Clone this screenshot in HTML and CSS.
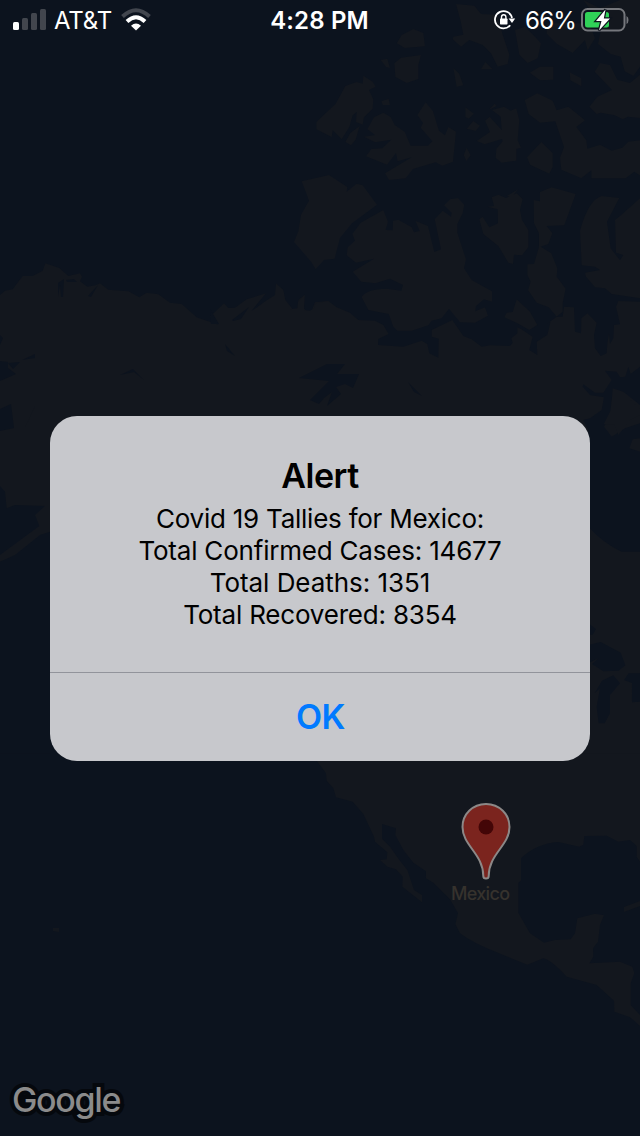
FILE: index.html
```
<!DOCTYPE html>
<html lang="en">
<head>
<meta charset="utf-8">
<title>Alert</title>
<link rel="stylesheet" href="styles.css">
</head>
<body>
<main class="screen">
  <svg class="map" viewBox="0 0 640 1136" aria-hidden="true">
    <!-- Arctic islands -->
    <g class="land" transform="translate(300 0) scale(.33333)">
      <path d="M468 12l55 5 20 25 50 2 15 60 20 60-5 28-30 8-20-40-25-25-40-15-25 20-25-22 2-8 30-6-8-40zM290 130l15-25 35-18 30 12 5 40-60 5zM645 90l30-10 30 30 18 20-10 45-30 14-25-25zM740 70h110v30l10 15-42 44-48-28-30-30zM845 85l25-10 15 40-22 36zM850 0l50 25 60-25h60v200l-20 28-26-14-12-44-30-8-38-30 8-40-22-50z"/>
    </g>
    <g class="land" transform="translate(290 40) scale(.33333)">
      <path d="M272 60l20-4 8 28-12-3zM313 70l20-17 60-8-8 30v42l-35 12-34-18zM490 84l18 18 12 34-20 5zM573 88l13-22 22 22zM719 98l30-18h41v39l-40 2zM839 97l35 18v24l-33-18zM79 268v-22l58-55 29-53 34-12 18 5 2-24 28 18 9 15-20 10 13 28-2 28-26 26-4 22-20-8 2-30-12 10-10 35-23 37-27-27-3 20zM166 306l15-27 28-21-12 41-14 17zM274 184l22-8 4 19h-22z"/>
      <path d="M222 290l33-5-23-18 20-35 28-14 22 13 12 24 30 20 18 42h52l13-13-35-41 7-14-17-24 25-38 22 27 18 58 18 14 10-25 23 14-9 90-32 12-20-10-68 20-22 28-50 5-12-20 80-48-42 12-5-25-27 35-63-25 16-22 33-2 27-26-49 8z"/>
      <path d="M526 202l26 19-16 15-10-5zM530 266l20-23 20 14-13 16zM597 209l17-18 6 7zM521 345l9-22 12 23-13 17zM560 303l40-27-15-34 14-12 36 40-3-40-26-20 36-10 20 12 17-7 9 36-5 60 10 22-14 4v35l-44 6-18-14 2-28 19-22-2-7-52 16zM711 352l43-46 34 33v42l-10 20-58-27zM704 180l38-20 46 22 12 29 35-11 50 41-26 20 30 40 3 25 38-12 35 18 32-9 18-18 36-4v106l-18-12-26 20H904v-24l-30 24-60-26-4-36 12-32-26-77-46 4-34-26zM914 95l16-26 30 6 22 44 38 10 30-25v130l-36-4-16 8-24-12-42-8-12 4-22-22 24-30 44-20z"/>
    </g>
    <!-- Victoria Island and its neighbours -->
    <g class="land" transform="translate(290 170) scale(.33333)">
      <path d="M35 34l82-19 55 36-2 14 30-24 18 5 43 58-75 56-36 44-16 62-32 4-25 28-13-22-52-60 13-32 8-50 24-42z"/>
      <path d="M187 192L212 158 280 120 294 155 287 180 308 181 309 152 325 149 365 172 372 187 389 183 376 152 414 168 433 246 453 238 434 148 458 122 483 140 485 128 462 106 480 88 504 84 523 104 518 130 502 162V188L528 268 522 295 545 330 606 364V395L582 388 558 408 556 424 585 412 594 437 555 458 510 457 477 416 455 445 425 452 415 466 365 482H322L310 470 296 432 235 420 215 382Q225 358 290 356L334 362 339 345 300 326 256 340 214 335 188 305 252 266 198 278 170 256 173 232 195 212z"/>
      <path d="M568 148L578 140 598 172 624 160 623 118 592 110 612 108 605 82 625 74 648 84 680 70 698 88 690 120 696 150 715 180V232L696 256 672 254 669 282 655 278 625 228 580 192zM650 78L685 58 665 80zM731 90L750 94V66L785 52 857 72 823 166 770 168 787 190 775 222 752 230 784 250 802 295 800 320 827 356 818 400 818 425 800 440 776 412 740 398 714 360 722 335 712 315V283L732 282 747 230V190L732 160zM870 182Q895 90 935 78L988 84 951 155 962 235 990 271 1000 255 978 248 975 150 990 138 1050 85V385L965 372 945 355 915 352 888 320 885 308 930 300 915 290 875 286zM643 442L650 428 668 426 680 388 720 425 742 465 718 480 682 460z"/>
    </g>
    <!-- Alaska -->
    <path class="land" transform="translate(0 240) scale(.33333)" d="M0 165L15 152 38 148 68 108 98 108 128 92 136 70 178 84 205 108 240 100 246 110 240 124 262 140 286 136 300 130 325 149 385 154 418 172 440 158 475 163 510 188 545 192 590 232 655 254 630 230 672 190 685 204 705 203 740 178 798 160 755 212 765 206 798 182 825 165 828 130 850 150 856 180 880 210 893 209 895 180 914 164 912 205 918 213 935 212 945 187 985 183 985 1500 150 1000 0 965z"/>
    <!-- mainland Canada and United States -->
    <path class="land" transform="translate(290 170) scale(.33333)" d="M0 418L22 415 24 395 44 376 42 420 60 422 72 415 76 400 115 393 140 412 180 428 205 450 255 452 280 465 296 492 265 507 264 525 340 530 395 512 412 522 418 550 445 563 446 506 425 500 425 480 487 450 520 498 545 508 575 530 600 526 660 528 668 518 664 505 682 490V472L694 478 728 500 718 540 742 555 740 515 772 495 782 452 770 462 800 440 818 440 822 410 852 412 855 485 873 490 874 445 892 430 920 458 912 495 915 535 932 558 950 550 952 520 957 490 960 522 970 505 972 465 990 463 978 410 985 393 1050 395V1800H200V1740H0z"/>
    <!-- Mexico and Central America -->
    <path class="land" transform="translate(300 740) scale(.33333)" d="M46 40L50 62 78 100 80 122 100 145 108 172 158 185 190 222 222 290 225 305 262 337 260 358 240 360 262 380 288 388 308 410 307 440 366 487V465L342 450 322 390 298 360 270 320 246 296V252L288 265 286 285 310 330 340 368 378 394V415L400 428 450 478 474 520 466 552 480 580Q520 610 590 637L682 674 730 655Q750 657 800 710L890 735 942 782 943 815 990 832 1020 858V825L992 795V730L1003 700 997 680 960 665 868 670 880 650 879 625 894 605 900 555 912 526 885 521 832 535 825 580 812 598 765 600 732 608 690 580 655 518V428L663 422V355Q710 310 775 306L838 320 850 314 853 288 920 287 955 305 990 300 1010 318V350L1020 365V40z"/>
    <path class="land" d="M624 907l16-6v5l-16 6zM53 928h6v4l-6-1z"/>
    <!-- lakes and bays -->
    <g class="water">
      <path d="M299 378l28-14h18l-8 10h22l-6 14-8-4-9 3 5 7-14 12 5-14-8 6-5 6-9-4 14-14 5-5zM408 382l14 14-8-4zM58 283l6-4-1 18h-2l-1-12-2 12zM66 280l8-1 3 3h-10zM88 296l10-11-7 12zM0 335l3 3-3 7zM0 361l8 1v6l8 6-16 7zM8 363l12-1-7 7zM22 360l13-6v4zM0 409l11-5 3 24-14 3zM232 320l17-13-8 12-8 2zM210 309l9 15h-8zM225 344l10 12-8-5zM120 375l13-6 11 11-10-8zM35 406l-10 22 9-20z"/>
      <path transform="translate(290 170) scale(.33333)" d="M945 602L980 605 990 622 1006 620 1015 590 1022 612 1050 590V705L1000 665 968 655 962 735 942 770 950 780 965 800 1005 775 1050 760V1145H995Q940 1120 895 1070V780L880 750 900 745 935 720 942 682 900 675 878 650 880 643 915 668 940 668 965 630z"/>
      <path transform="translate(540 400) scale(.33333)" d="M148 672l20 15-10 17h-10zM148 734l34-8 60 32 14 38-20 16-46 2-34-22 20-18-28 14zM164 880l22-38 34-16 20 24-30 35v55l-16 30h-18l-6-50 10-55zM252 840l14-20h34v85l-24 2v-58z"/>
      <path transform="translate(0 400) scale(.33333)" d="M0 258L15 275 20 325 45 315 135 318 105 345 118 378 0 465zM0 485L45 465 120 405 150 395V1060H0z"/>
    </g>
    <path class="land" transform="translate(540 400) scale(.33333)" d="M215 0h55l30 25v20l-30 15-35 45-12-32-32 0 20-40zM268 145l10-27 22-3v40z"/>
    <text class="place" x="451" y="900" textLength="59">Mexico</text>
    <path class="pin" d="M486 804c-13.500 0-23.500 10.500-23.500 23 0 18.500 20.800 27 20.800 49q0 2.500 2.700 2.500t2.700-2.500c0-22 20.800-30.500 20.800-49 0-12.500-10-23-23.500-23z"/>
    <circle class="pin-dot" cx="486" cy="827" r="7.500"/>
  </svg>

  <header class="status">
    <div class="status-side">
      <svg class="signal" width="34" height="22" viewBox="0 0 34 22">
        <rect x="0" y="13" width="6" height="8" rx="1.500" fill="#fff"/>
        <g fill="#42464e"><rect x="9" y="9" width="6" height="12" rx="1.500"/><rect x="18" y="4" width="6" height="17" rx="1.500"/><rect x="27" y="0" width="6" height="21" rx="1.500"/></g>
      </svg>
      <span class="carrier">AT&amp;T</span>
      <svg class="wifi" width="30" height="23" viewBox="0 0 30 23" fill="none">
        <path d="M1.500 8.500Q15-4 28.500 8.500" stroke="#42464e" stroke-width="4"/>
        <path d="M6 13.500Q15 5 24 13.500" stroke="#fff" stroke-width="4"/>
        <path d="M10 17.700Q15 13.500 20 17.700L15 22.500z" fill="#fff"/>
      </svg>
    </div>
    <div class="clock">4:28 PM</div>
    <div class="status-side status-right">
      <svg class="lock" width="22" height="20" viewBox="0 0 22 20" fill="none">
        <path d="M18 8A8.600 8.600 0 1 0 16.200 15.200" stroke="#fff" stroke-width="1.800"/>
        <path d="M14.600 8.500H21.200L18 13z" fill="#fff"/>
        <rect x="6" y="8.500" width="7.500" height="6" rx=".7" fill="#fff"/>
        <path d="M7.500 9V7a2.200 2.200 0 0 1 4.400 0v2" stroke="#fff" stroke-width="1.400"/>
      </svg>
      <span class="percent">66%</span>
      <svg class="battery" width="48" height="24" viewBox="0 0 48 24">
        <rect x="1" y="1" width="42.500" height="21.500" rx="5.500" fill="none" stroke="#75777c" stroke-width="2"/>
        <path d="M45.500 8q2 1 2 4t-2 4z" fill="#75777c"/>
        <rect x="4" y="4" width="24" height="15.500" rx="2.500" fill="#30d158"/>
        <path d="M24.500 1.500L15 13h5.500L18 22.500 29 10.500h-6.200z" fill="#fff" stroke="#0f151e" stroke-width="2.500" paint-order="stroke"/>
      </svg>
    </div>
  </header>

  <section class="alert" role="alertdialog" aria-labelledby="title">
    <div class="alert-body">
      <h1 class="alert-title" id="title">Alert</h1>
      <p class="line line-name">Covid 19 Tallies for Mexico:</p>
      <p class="line line-cases">Total Confirmed Cases: 14677</p>
      <p class="line line-deaths">Total Deaths: 1351</p>
      <p class="line line-recovered">Total Recovered: 8354</p>
    </div>
    <button class="ok">OK</button>
  </section>

  <footer class="google">Google</footer>
</main>
</body>
</html>
```
FILE: styles.css
```
* { box-sizing: border-box; }
body { margin: 0; background: #0c131e; }
.screen {
  position: relative;
  display: flex;
  flex-direction: column;
  align-items: center;
  width: 640px;
  height: 1136px;
  overflow: hidden;
  font-family: Inter, "Liberation Sans", sans-serif;
}
.map { position: absolute; inset: 0; width: 640px; height: 1136px; }
.land { fill: #13171e; }
.water { fill: #0c131e; }
.place { fill: #36322d; font-size: 18px; font-weight: 500; }
.pin { fill: #7b241e; stroke: #8c8887; stroke-width: 2; }
.pin-dot { fill: #430607; }

.status {
  position: relative;
  display: grid;
  grid-template-columns: 1fr auto 1fr;
  align-items: center;
  width: 100%;
  height: 41px;
  padding: 0 11px 0 13px;
  color: #fff;
  font-size: 24px;
  line-height: 41px;
}
.status-side { display: flex; align-items: center; }
.status-side svg { margin-bottom: 2px; }
.status-right { justify-content: flex-end; }
.carrier { margin-left: 7px; letter-spacing: -.2px; }
.status-side .wifi { margin-left: 9px; }
.clock { margin-right: 3px; font-weight: 600; letter-spacing: .15px; }
.percent { margin: 0 5px 0 9px; letter-spacing: -.8px; }

.alert {
  position: relative;
  display: flex;
  flex-direction: column;
  width: 540px;
  height: 345px;
  margin-top: 375px;
  border-radius: 27px;
  overflow: hidden;
  background: #c7c8cc;
  color: #000;
  text-align: center;
}
.alert-body { height: 256px; padding-top: 39px; }
.alert-title { margin: 0 0 6px; font-size: 34px; font-weight: 600; line-height: 42px; letter-spacing: -.5px; }
.line { margin: 0; font-size: 26px; line-height: 32px; }
.line-name { letter-spacing: -.24px; }
.line-cases { letter-spacing: -.2px; }
.line-deaths { letter-spacing: -.05px; }
.line-recovered { letter-spacing: -.2px; }
.ok {
  flex: 1;
  border: 0;
  border-top: 1px solid #92949b;
  padding: 0 0 0 1px;
  background: none;
  color: #007aff;
  font: 600 34px/88px Inter, sans-serif;
  letter-spacing: -.5px;
}
.google {
  position: relative;
  align-self: flex-start;
  margin: 317px 0 0 12px;
  color: #8b8b8b;
  font: 500 34px/44px Inter, sans-serif;
  letter-spacing: -1.3px;
  -webkit-text-stroke: 8px #05080d;
  paint-order: stroke fill;
}
```
